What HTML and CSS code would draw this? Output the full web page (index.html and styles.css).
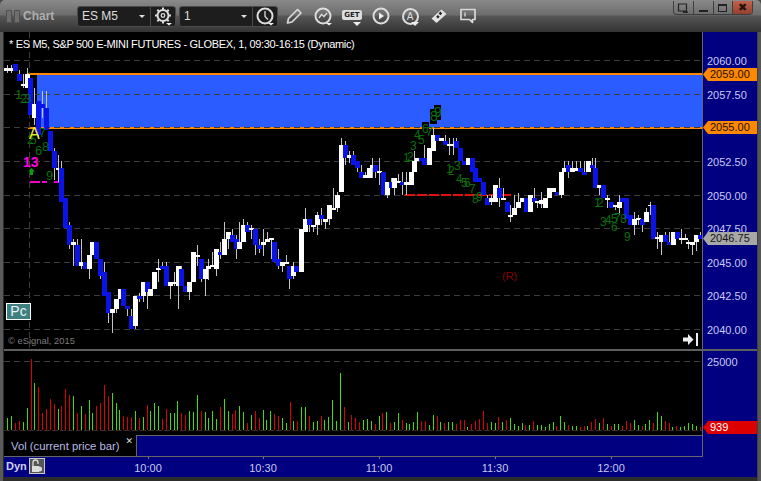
FILE: index.html
```html
<!DOCTYPE html>
<html lang="en">
<head>
<meta charset="utf-8">
<title>Chart</title>
<link rel="stylesheet" href="styles.css">
</head>
<body>
<div class="window">
  <header class="titlebar">
    <div class="brand"><span class="handle"></span><span class="handle"></span><span class="brand-name">Chart</span></div>
    <div class="combo combo-symbol">
      <span class="combo-value">ES M5</span><span class="caret"></span>
      <span class="combo-btn"><svg width="20" height="20" viewBox="0 0 20 20"><circle cx="10" cy="9.5" r="5.5" class="i-heavy"/><circle cx="10" cy="9.5" r="1.8" class="i-line"/><path d="M10 1.5v2M10 15.5v2M2 9.5h2M16 9.5h2M4.3 3.8l1.500 1.500M14.2 13.7l1.500 1.500M15.7 3.8l-1.500 1.500M5.8 13.7l-1.500 1.500" class="i-heavy"/><path d="M13 17h6l-3 2.5z" class="i-fill"/></svg></span>
    </div>
    <div class="combo combo-interval">
      <span class="combo-value">1</span><span class="caret"></span>
      <span class="combo-btn"><svg width="20" height="20" viewBox="0 0 20 20"><circle cx="10" cy="10" r="7.5" class="i-heavy"/><path d="M10 5v5.500l3 3" class="i-line"/><path d="M13 17h6l-3 2.5z" class="i-fill"/></svg></span>
    </div>
    <div class="tools">
      <span class="tool"><svg width="20" height="20" viewBox="0 0 20 20"><path d="M3.5 17l1-4.500L13.5 3.5l3.500 3.500-9 9z" class="i-soft"/></svg></span>
      <span class="tool"><svg width="20" height="20" viewBox="0 0 20 20"><circle cx="10" cy="10" r="7.5" class="i-heavy"/><path d="M6 12l2.500-3.500 2.500 2 3-3.500" class="i-line"/><path d="M13 17h6l-3 2.5z" class="i-fill"/></svg></span>
      <span class="tool"><span class="get">GET</span><svg class="get-caret" width="8" height="4" viewBox="0 0 8 4"><path d="M0 0h8l-4 4z" class="i-fill"/></svg></span>
      <span class="tool"><svg width="20" height="20" viewBox="0 0 20 20"><circle cx="10" cy="10" r="7.5" class="i-heavy"/><path d="M8 6.5l5 3.500-5 3.500z" class="i-fill"/></svg></span>
      <span class="tool"><span class="a-ring">A</span><svg class="get-caret" width="8" height="4" viewBox="0 0 8 4"><path d="M0 0h8l-4 4z" class="i-fill"/></svg></span>
      <span class="tool"><svg width="20" height="20" viewBox="0 0 20 20"><path d="M2.5 12.5l10-9 5 4.500-10 9z" class="i-solid"/><path d="M10.5 6.5l1.800 1.800M8 9.8l1.800 1.800" class="i-dark"/></svg></span>
      <span class="tool"><svg width="20" height="20" viewBox="0 0 20 20"><path d="M3 3.5h14v10h-2.500v3l-3-3H3z" class="i-soft"/><path d="M7 6.5v4" class="i-line"/></svg></span>
    </div>
    <div class="win-buttons">
      <span class="win-btn"><svg width="12" height="10" viewBox="0 0 12 10"><path d="M1.5 1h8v7h-8zM6 9h5l-2.500 1z" class="i-win"/></svg></span>
      <span class="win-btn"><span class="win-min"></span></span>
      <span class="win-btn"><span class="win-max"></span></span>
      <span class="win-btn win-close">✖</span>
    </div>
  </header>

  <main class="frame">
    <section class="price-row">
      <div class="plot-wrap">
        <svg id="price-plot" class="plot" width="698" height="317" viewBox="4 32 698 317"></svg>
        <p class="chart-title">* ES M5, S&amp;P 500 E-MINI FUTURES - GLOBEX, 1, 09:30-16:15 (Dynamic)</p>
        <span class="pc-btn">Pc</span>
        <p class="copyright">© eSignal, 2015</p>
        <svg class="jump" width="16" height="13" viewBox="0 0 16 13"><path d="M0 4.5h5V1l5.500 5.500L5 12V8.5H0z" class="i-bright"/><path d="M13 0h2v13h-2z" class="i-bright"/></svg>
      </div>
      <div id="price-axis" class="axis"></div>
    </section>
    <div class="rule"></div>
    <section class="lower">
      <div class="lower-main">
        <svg id="volume-plot" class="plot" width="698" height="84" viewBox="4 351 698 84"></svg>
        <div class="study-row">
          <div class="study-tab"><span>Vol (current price bar)</span><span class="study-close">✕</span></div>
          <div class="study-fill"></div>
        </div>
      </div>
      <div id="volume-axis" class="axis axis-volume"></div>
    </section>
    <footer id="time-axis" class="time-axis">
      <span class="dyn">Dyn</span>
      <span class="lock"><svg width="14" height="14" viewBox="0 0 14 14"><path d="M3 7V3.5a2.500 2.500 0 0 1 5 0V5" class="i-lock"/><path d="M2 7h7v6H2z" class="i-lockfill"/><circle cx="9.5" cy="10" r="2.5" class="i-lockfill"/></svg></span>
    </footer>
  </main>
</div>
<script src="chart.js"></script>
</body>
</html>
```
FILE: styles.css
```css
* { box-sizing: border-box; }
html, body { margin: 0; padding: 0; background: #3a3a3a; }
.window {
  width: 761px; height: 481px; display: flex; flex-direction: column; overflow: hidden;
  font-family: "Liberation Sans", Arial, sans-serif;
  background: #484848;
}
.titlebar {
  height: 32px; flex: none; display: flex; align-items: center; padding-left: 6px;
  background: linear-gradient(#8a8a8a 0, #6c6c6c 15px, #565656 16px, #333 32px);
  border-radius: 5px 5px 0 0;
}
.brand { width: 71px; flex: none; display: flex; align-items: center; gap: 2px; }
.handle { width: 6px; height: 13px; border: 1px solid #4e4e4e; border-radius: 1px; background: #6e6e6e; }
.brand-name { margin-left: 1px; color: #aeaeae; font-size: 12px; font-weight: bold; }
.combo {
  height: 21px; display: flex; align-items: center; flex: none; position: relative;
  background: #1d1d1d; border: 1px solid #4a4a4a; border-radius: 3px; color: #ddd;
}
.combo-symbol { width: 99px; }
.combo-interval { width: 99px; margin-left: 3px; }
.combo-value { flex: 1; padding-left: 4px; font-size: 12px; }
.caret { width: 0; height: 0; border: 3px solid transparent; border-top: 3px solid #ddd; border-bottom: 0; margin-right: 5px; }
.combo-btn { width: 25px; height: 19px; flex: none; display: flex; align-items: center; justify-content: center; border-left: 1px solid #4a4a4a; }
.tools { display: flex; margin-left: 4px; gap: 5px; }
.tool { width: 24px; height: 22px; position: relative; display: flex; align-items: center; justify-content: center; }
.get {
  font-size: 7px; font-weight: bold; color: #222; background: #ddd; border-radius: 2px;
  padding: 1px 2px; line-height: 8px; font-family: "DejaVu Sans", sans-serif; margin-top: -3px;
}
.get-caret { position: absolute; right: 3px; bottom: 1px; }
.a-ring {
  width: 17px; height: 17px; border: 2px solid #ddd; border-radius: 50%; color: #ddd;
  font-size: 10px; line-height: 13px; text-align: center;
}
.i-heavy { fill: none; stroke: #ddd; stroke-width: 2; }
.i-line { fill: none; stroke: #ddd; stroke-width: 1.3; }
.i-soft { fill: none; stroke: #d8d8d8; stroke-width: 1.7; stroke-linejoin: round; }
.i-fill { fill: #eee; }
.i-solid { fill: #e2e2e2; }
.i-dark { fill: none; stroke: #222; stroke-width: 2.5; }
.i-win { fill: none; stroke: #222; stroke-width: 1.2; }
.i-bright { fill: #eee; }
.i-lock { fill: none; stroke: #ddd; stroke-width: 1.3; }
.i-lockfill { fill: #ddd; }
.win-buttons {
  margin-left: auto; margin-right: 8px; align-self: flex-start; margin-top: 1px; display: flex;
  width: 80px; height: 14px; border: 1px solid #3e3e3e; border-top: 0; border-radius: 0 0 4px 4px; overflow: hidden;
}
.win-btn { flex: 1; display: flex; align-items: center; justify-content: center; border-right: 1px solid #3e3e3e; }
.win-btn:last-child { border-right: 0; }
.win-close { background: linear-gradient(#c2624e, #96402e); color: #2a120c; font-size: 11px; line-height: 1; }
.win-min { width: 9px; height: 2px; background: #222; margin-top: 6px; }
.win-max { width: 9px; height: 8px; border: 1px solid #222; border-top-width: 2px; }

.frame { flex: 1; padding: 0 4px 4px; display: flex; flex-direction: column; background: linear-gradient(90deg, #5a5a5a 3px, #2c2c2c 3px, #2c2c2c 4px, #2c2c2c 757px, #555 758px); }
.price-row { height: 317px; flex: none; display: flex; }
.plot-wrap { width: 699px; height: 317px; flex: none; position: relative; border-right: 1px solid #666; background: #000; }
.plot { display: block; background: #000; }
.chart-title { position: absolute; left: 5px; top: 5px; margin: 0; color: #fff; font-size: 11px; letter-spacing: -0.33px; line-height: 14px; white-space: nowrap; }
.pc-btn {
  position: absolute; left: 2px; top: 271px; width: 25px; height: 17px; background: #3f7f7f;
  border: 1px solid #fff; color: #e8f4f4; font-size: 14px; line-height: 15px; text-align: center;
}
.copyright { position: absolute; left: 4px; top: 303px; margin: 0; color: #7c7c7c; font-size: 9.4px; line-height: 12px; white-space: nowrap; }
.jump { position: absolute; left: 679px; top: 301px; }
.axis { flex: 1; position: relative; background: #000080; overflow: hidden; }
.tick-label { position: absolute; left: 4px; transform: translateY(-50%); color: #c9c9f0; font-size: 11px; line-height: 13px; }
.tag {
  position: absolute; left: 0; width: 54px; height: 13px; padding-left: 7px;
  clip-path: polygon(0 50%, 5px 0, 100% 0, 100% 100%, 5px 100%);
  font-size: 11px; line-height: 13px;
}
.tag-orange { background: #ff8800; color: #1e1000; }
.tag-gray { background: #a8a8a8; color: #141414; }
.tag-red { background: #dd0000; color: #fff; }
.rule { height: 2px; flex: none; background: #5e5e5e; }
.lower { height: 106px; flex: none; display: flex; background: #000080; }
.lower-main { width: 699px; flex: none; border-right: 1px solid #666; }
.study-row { height: 22px; display: flex; border-bottom: 1px solid #666; }
.study-tab {
  width: 133px; flex: none; background: #000; color: #b9b9e6; font-size: 11.3px; line-height: 22px;
  padding-left: 7px; display: flex; justify-content: space-between; border-right: 1px solid #666; white-space: nowrap;
}
.study-close { color: #ddd; font-size: 9px; line-height: 12px; padding-right: 3px; font-family: "DejaVu Sans", sans-serif; font-weight: bold; }
.study-fill { flex: 1; border-top: 1px solid #666; }
.time-axis { height: 20px; flex: none; position: relative; background: #000080; }
.dyn { position: absolute; left: 2px; top: 1px; color: #d0d0f4; font-size: 11px; line-height: 16px; font-weight: bold; }
.lock {
  position: absolute; left: 25px; top: 1px; width: 16px; height: 16px; background: #555;
  border: 1px solid #c8c8c8; display: flex; align-items: center; justify-content: center;
}
.time-tick { position: absolute; top: 0; width: 1px; height: 2px; background: #777; }
.time-label { position: absolute; top: 5px; transform: translateX(-50%); color: #c9c9f0; font-size: 11px; line-height: 13px; }
.grid { stroke: #3c3c3c; stroke-width: 1; stroke-dasharray: 6 4; shape-rendering: crispEdges; }
.digit { fill: #0c6e0c; font-family: "Liberation Sans", Arial, sans-serif; }
.label-a { fill: #f4ec30; font-family: "Liberation Sans", Arial, sans-serif; font-size: 16px; }
.label-13 { fill: #ff00e0; font-family: "Liberation Sans", Arial, sans-serif; font-size: 14px; font-weight: bold; }
.label-r { fill: #860000; font-family: "Liberation Sans", Arial, sans-serif; font-size: 11px; }
```
FILE: chart.js
```js
var SVG = 'http://www.w3.org/2000/svg';
function el(parent, name, attrs, text) {
  var n = document.createElementNS(SVG, name);
  for (var k in attrs) n.setAttribute(k, attrs[k]);
  if (text) n.textContent = text;
  parent.appendChild(n);
  return n;
}
function rect(p, x, y, w, h, fill) {
  if (h <= 0 || w <= 0) return;
  el(p, 'rect', { x: x, y: y, width: w, height: h, fill: fill, 'shape-rendering': 'crispEdges' });
}
function hline(p, y, x1, x2) {
  el(p, 'line', { x1: x1, x2: x2, y1: y + 0.5, y2: y + 0.5, 'class': 'grid' });
}

/* type centre-x body-top body-bottom wick-top wick-bottom, in screen pixels */
var CANDLES = 'w3 68 71 65 81;w7 68 71 65 73;w11 68 71 65 73;b15 64 71 64 71;b19 74 81 70 81;w23 84 86 74 88;w27 74 88 68 88;b30 78 115 78 115;w34 104 118 88 125;b38 101 135 101 138;b42 104 108 91 118;b46 108 130 91 130;b50 131 151 131 151;b54 151 168 148 180;w58 168 170 155 182;b61 168 202 161 202;b65 198 228 198 228;b69 225 245 222 249;w73 242 245 239 266;b77 245 266 239 266;w81 262 266 239 269;b85 262 269 262 269;w89 255 269 255 279;w92 242 255 242 255;b96 242 259 242 259;b100 259 276 259 279;b104 272 296 262 296;b108 292 313 292 323;w112 309 313 309 333;w116 299 309 299 313;w120 289 299 289 299;b123 289 306 289 306;b127 306 309 306 316;b131 316 329 309 329;w135 296 326 296 329;b139 296 299 293 302;w143 282 296 282 302;b147 282 292 282 309;w150 289 296 289 296;w154 272 289 272 289;w158 268 270 259 282;b162 266 269 262 269;b166 266 286 262 286;w170 282 286 282 299;w174 282 284 272 286;w178 266 286 266 309;b181 269 286 266 286;b185 286 292 286 292;w189 282 292 282 300;w193 252 282 252 282;w197 255 257 245 266;b201 259 279 259 282;w205 269 279 269 296;w208 266 269 259 280;w212 265 267 252 267;w216 249 269 249 276;b220 252 255 242 259;w224 239 255 222 255;w228 232 239 232 249;b232 235 242 229 242;b236 239 249 235 259;w239 242 249 222 249;w243 225 242 219 242;b247 225 232 222 232;w251 228 230 225 239;b255 229 245 229 255;b259 245 249 239 253;w263 242 245 229 256;w267 239 242 232 242;w271 238 240 238 259;b274 242 262 242 262;b278 259 266 249 269;w282 262 266 262 272;w286 262 264 255 264;b289 266 279 266 289;w293 266 276 262 279;b296 266 272 266 272;w301 229 272 229 272;w305 219 232 208 232;b309 219 225 219 232;w313 225 227 225 232;w317 215 225 212 235;b321 215 219 208 225;w325 219 222 219 229;w329 205 219 205 225;w333 208 210 188 210;w337 195 208 192 212;w341 145 192 138 192;b345 145 158 141 165;w349 155 158 151 163;b353 155 165 151 165;b357 161 168 161 172;b361 172 178 165 178;w365 175 178 172 178;w369 168 178 168 178;w372 165 168 158 178;b375 165 172 165 178;w379 171 173 158 185;b383 172 195 172 195;w387 182 195 182 198;b391 182 188 178 188;w394 178 188 178 195;w398 181 183 174 183;b402 182 185 172 195;w406 182 185 172 195;w411 172 185 172 185;w414 161 172 151 172;w417 158 161 158 161;b421 158 161 158 161;b424 158 165 145 165;w429 148 165 148 165;w433 135 151 128 151;b437 135 141 135 141;w441 138 141 138 141;b445 141 145 135 145;w449 144 146 138 155;w453 144 146 138 155;b456 141 148 138 148;b460 148 161 148 161;b464 161 165 161 165;w468 158 165 158 165;b472 158 172 158 172;b475 168 182 168 182;b479 178 182 178 182;b483 182 195 182 195;b487 198 205 195 205;w491 198 202 195 205;w495 185 202 185 202;b499 188 198 178 207;w503 198 200 188 200;b507 202 212 202 212;w510 215 217 205 222;w514 208 215 195 215;w518 202 208 193 208;w522 198 202 198 202;b526 198 212 198 212;w530 195 212 195 212;b534 198 202 188 202;w537 201 203 201 208;w541 200 204 192 208;w545 198 208 198 208;w549 188 198 188 198;w553 188 192 188 192;b557 192 195 192 195;w561 172 195 172 198;w564 168 172 161 172;b568 165 172 161 178;w572 168 172 161 172;w576 168 171 161 171;b580 168 172 161 172;b584 172 175 161 175;w588 161 172 161 172;b592 165 168 158 168;b595 168 188 158 188;w599 185 188 185 195;b603 185 198 185 198;w607 198 200 195 208;b611 202 208 202 208;w615 205 207 205 210;w619 202 208 195 215;b622 198 202 198 202;b626 198 219 198 219;b630 215 225 215 225;w634 219 225 212 235;w638 218 220 215 225;b642 219 225 219 232;w646 212 222 208 222;w650 205 206 202 215;b653 205 239 205 239;w657 237 239 232 249;w661 235 242 235 255;b665 235 242 232 242;b669 242 245 232 245;w673 232 245 232 245;b677 232 239 232 239;w681 238 240 229 244;w685 238 240 234 240;w688 242 244 240 249;w692 242 245 242 255;w696 235 242 235 251;b700 235 239 232 239';

/* signed volume heights: positive green, negative red */
var VOLUME = [7,12,14,-7,-9,8,22,-71,47,-43,-17,-21,-31,-26,21,-24,-41,-35,34,-17,24,-16,30,17,-24,-27,-45,-34,37,27,20,-14,-13,-13,19,-12,13,-25,19,27,24,-11,-21,17,17,29,-17,-15,19,18,35,-19,18,12,19,11,-23,31,19,-16,-20,24,18,-7,
  15,-19,-12,20,10,19,-16,-14,12,7,-28,9,-9,23,23,-14,8,9,-14,10,13,30,9,57,-23,8,-15,-12,-8,10,11,9,-6,14,-17,18,-7,8,17,-10,7,6,8,18,-9,-9,5,15,-14,8,-7,8,8,-6,-10,-10,3,-6,-9,-11,-19,-7,8,7,-13,
  8,-10,12,6,4,7,-5,5,-9,5,5,3,6,8,-4,14,8,-5,4,4,-3,-4,4,-8,-11,7,-12,6,-4,6,6,-4,-9,-7,10,5,-4,6,10,-7,18,14,-9,-7,3,-4,3,4,7,6,4,-3];

/* [digit, x, y, size] */
var DIGITS = [
  ['1',18,99,13],['2',23,103,13],['3',27,103,13],['2',30,144,12],['5',33,144,12],['7',42,137,12],['6',38,155,13],['8',45,151,13],['9',49,180,13],
  ['1',406,162,12],['2',410,161,12],['3',413,150,12],['4',417,139,12],['5',421,144,12],['6',425,133,12],['7',429,136,12],['8',433,121,14],['9',437,117,14],
  ['1',449,173,12],['2',451,175,12],['3',457,170,12],['4',459,183,12],['5',464,187,12],['6',467,187,12],['7',472,193,12],['8',475,203,12],['9',479,201,12],
  ['1',597,207,12],['2',600,207,12],['3',603,226,12],['4',608,224,12],['5',614,223,12],['6',614,231,12],['7',617,222,12],['8',623,223,12],['9',627,241,12]
];

var price = document.getElementById('price-plot');
rect(price, 37, 75, 665, 52, '#2a5cff');
rect(price, 28, 73, 674, 2, '#ff8800');
rect(price, 28, 127, 674, 2, '#ff8800');
[60, 94, 127, 161, 195, 228, 262, 295, 329].forEach(function (y) {
  hline(price, y, 4, 702);
});
el(price, 'line', { x1: 29.5, x2: 29.5, y1: 32, y2: 349, 'class': 'grid' });
[[30,10],[42,5],[54,6]].forEach(function (d) { rect(price, d[0], 181, d[1], 2, '#f000d0'); });
for (var rx = 405; rx < 508; rx += 12) rect(price, rx, 194, 10, 2, '#e01010');

rect(price, 434, 105, 7, 15, '#000');
rect(price, 430, 109, 7, 15, '#000');
rect(price, 422, 122, 7, 8, '#000');

CANDLES.split(';').forEach(function (row) {
  var kind = row.charAt(0);
  var v = row.slice(1).split(' ').map(Number);
  rect(price, v[0], v[3], 1, v[4] - v[3], '#c4c4c4');
  rect(price, v[0] - 2, v[1], 5, v[2] - v[1], kind === 'w' ? '#ffffff' : '#0a14e6');
});

DIGITS.forEach(function (d) {
  el(price, 'text', { x: d[1] - 3, y: d[2], 'font-size': d[3], 'class': 'digit' }, d[0]);
});
el(price, 'text', { x: 29, y: 139, 'class': 'label-a' }, 'A');
el(price, 'text', { x: 23, y: 167, 'class': 'label-13' }, '13');
el(price, 'path', { d: 'M31.5 168l3.500 3.500h-2V175h-3v-3.500h-2z', fill: '#0a9a0a' });
el(price, 'text', { x: 502, y: 280, 'class': 'label-r' }, '(R)');

function label(axis, text, y) {
  var s = document.createElement('span');
  s.className = 'tick-label';
  s.style.top = (y + 0.5) + 'px';
  s.textContent = text;
  axis.appendChild(s);
}
function tag(axis, text, top, cls) {
  var s = document.createElement('span');
  s.className = 'tag ' + cls;
  s.style.top = top + 'px';
  s.textContent = text;
  axis.appendChild(s);
}
var pa = document.getElementById('price-axis');
[['2060.00',60],['2057.50',94],['2052.50',161],['2050.00',195],['2047.50',228],['2045.00',262],['2042.50',295],['2040.00',329]].forEach(function (t) {
  label(pa, t[0], t[1] - 32);
});
tag(pa, '2059.00', 36, 'tag-orange');
tag(pa, '2055.00', 89, 'tag-orange');
tag(pa, '2046.75', 200, 'tag-gray');

var vol = document.getElementById('volume-plot');
hline(vol, 361, 4, 702);
VOLUME.forEach(function (h, k) {
  var x = Math.floor(3.95 + 3.867 * k);
  var a = Math.abs(h);
  rect(vol, x, 430 - a, 1, a, h > 0 ? '#44dd00' : '#dd0000');
});
el(vol, 'line', { x1: 4, x2: 702, y1: 430.5, y2: 430.5, stroke: '#3c2a2a', 'stroke-dasharray': '6 2', 'shape-rendering': 'crispEdges' });

var va = document.getElementById('volume-axis');
label(va, '25000', 10);
tag(va, '939', 70, 'tag-red');

var ta = document.getElementById('time-axis');
[['10:00',148],['10:30',263],['11:00',379],['11:30',495],['12:00',611]].forEach(function (t) {
  var tick = document.createElement('span');
  tick.className = 'time-tick';
  tick.style.left = (t[1] - 4) + 'px';
  ta.appendChild(tick);
  var s = document.createElement('span');
  s.className = 'time-label';
  s.style.left = (t[1] - 4) + 'px';
  s.textContent = t[0];
  ta.appendChild(s);
});
```
